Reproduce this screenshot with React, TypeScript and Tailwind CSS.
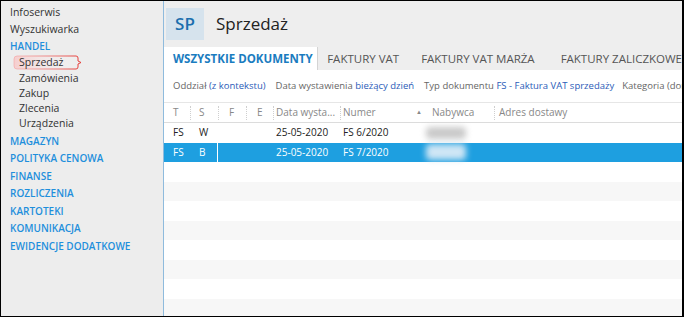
import React from "react";

const FONT = { fontFamily: '"Open Sans", "Noto Sans", sans-serif' };

const topItems = ["Infoserwis", "Wyszukiwarka"];
const subItems = ["Zamówienia", "Zakup", "Zlecenia", "Urządzenia"];
const sections = ["MAGAZYN", "POLITYKA CENOWA", "FINANSE", "ROZLICZENIA", "KARTOTEKI", "KOMUNIKACJA", "EWIDENCJE DODATKOWE"];

type Row = { t: string; s: string; date: string; num: string; selected?: boolean };

const rows: Row[] = [
  { t: "FS", s: "W", date: "25-05-2020", num: "FS 6/2020" },
  { t: "FS", s: "B", date: "25-05-2020", num: "FS 7/2020", selected: true },
];

function Sidebar() {
  return (
    <div className="w-[162px] shrink-0 bg-[#ededed] pt-[3px] text-[10.5px] text-[#333]" style={FONT}>
      {topItems.map((t) => (
        <div key={t} className="h-[17px] leading-[17px] pl-[9px]">{t}</div>
      ))}
      <div className="h-[16px] leading-[16px] pl-[9px] text-[10px] font-semibold text-[#1e8fdc]">HANDEL</div>
      {/* highlighted current item */}
      <div className="relative h-[17px] leading-[17px] pl-[18px]">
        <svg className="absolute left-[12px] top-[1px]" width="70" height="15" viewBox="0 0 70 15">
          <defs>
            <linearGradient id="hl" x1="0" x2="1" y1="0" y2="0">
              <stop offset="0" stopColor="#f4a3a3" stopOpacity="0.6" />
              <stop offset="1" stopColor="#e53935" stopOpacity="1" />
            </linearGradient>
            <linearGradient id="hlf" x1="0" x2="1" y1="0" y2="0">
              <stop offset="0" stopColor="#f7caca" stopOpacity="0.9" />
              <stop offset="0.5" stopColor="#f7e4e4" stopOpacity="0.4" />
              <stop offset="1" stopColor="#ffffff" stopOpacity="0" />
            </linearGradient>
          </defs>
          <path d="M4 1 H63 Q65 1 65 3 V6 L68 7.5 L65 9 V12 Q65 14 63 14 H4 Q1 14 1 11 V4 Q1 1 4 1 Z" fill="url(#hlf)" stroke="url(#hl)" strokeWidth="1" />
        </svg>
        <span className="relative">Sprzedaż</span>
      </div>
      {subItems.map((t) => (
        <div key={t} className="h-[15px] leading-[15px] pl-[18px]">{t}</div>
      ))}
      <div className="h-[1.5px]" />
      {sections.map((t) => (
        <div key={t} className="h-[17.5px] leading-[17.5px] pl-[9px] text-[10px] font-semibold text-[#1e8fdc]">{t}</div>
      ))}
    </div>
  );
}

function Tabs() {
  return (
    <div className="flex h-[23px] shrink-0 bg-[#eeeeee] text-[11.5px] whitespace-nowrap">
      <div className="flex items-center w-[158px] bg-white pl-[9px] font-bold text-[#1a7cc0] border-r border-[#d4d4d4]">
        WSZYSTKIE DOKUMENTY
      </div>
      <div className="flex items-center pl-[9px] pr-[22px] text-[#555]">FAKTURY VAT</div>
      <div className="flex items-center pr-[26px] text-[#555]">FAKTURY VAT MARŻA</div>
      <div className="flex items-center text-[#555]">FAKTURY ZALICZKOWE</div>
    </div>
  );
}

function Filters() {
  return (
    <div className="flex items-center h-[33px] shrink-0 pl-[9px] text-[9.5px] text-[#666] whitespace-nowrap border-b border-[#e6e6e6]">
      <span>Oddział <span className="text-[#2b5cb8]">(z kontekstu)</span></span>
      <span className="ml-[10px]">Data wystawienia <span className="text-[#2b5cb8]">bieżący dzień</span></span>
      <span className="ml-[10px]">Typ dokumentu <span className="text-[#2b5cb8]">FS - Faktura VAT sprzedaży</span></span>
      <span className="ml-[8px]">Kategoria (domyślna)</span>
    </div>
  );
}

function Sep() {
  return <div className="h-[14px] border-l border-dotted border-[#cfcfcf]" />;
}

function Grid() {
  const empty = Array.from({ length: 8 });
  return (
    <div className="text-[10px]">
      <div className="flex items-center h-[20px] text-[#888] whitespace-nowrap border-b border-[#dcdcdc]">
        <div className="w-[26px] pl-[9px]">T</div>
        <Sep />
        <div className="w-[27px] pl-[8px]">S</div>
        <Sep />
        <div className="w-[27px] pl-[10px]">F</div>
        <Sep />
        <div className="w-[26px] pl-[10px]">E</div>
        <Sep />
        <div className="w-[66px] pl-[2px] overflow-hidden">Data wysta...</div>
        <Sep />
        <div className="w-[75px] pl-[2px]">Numer</div>
        <div className="w-[78px] flex items-center">
          <span className="text-[6px] mr-[10px]">▲</span>
          <span>Nabywca</span>
        </div>
        <Sep />
        <div className="pl-[4px]">Adres dostawy</div>
      </div>
      {rows.map((r, i) => (
        <div
          key={i}
          className={
            r.selected
              ? "relative flex items-center h-[19.5px] bg-[#1e9fe0] text-white"
              : "relative flex items-center h-[19.5px] bg-white text-[#222]"
          }
        >
          <div className="w-[27px] pl-[9px]">{r.t}</div>
          <div className="w-[26px] pl-[8px]">{r.s}</div>
          <div className={r.selected ? "w-[55px] h-full border-l border-white" : "w-[55px] h-full"} />
          <div className="w-[67px] pl-[4px]">{r.date}</div>
          <div className="w-[80px] pl-[4px]">{r.num}</div>
          <div
            className={
              r.selected
                ? "ml-[7px] w-[40px] h-[16px] rounded-[4px] bg-[#cfe6f5] blur-[3px]"
                : "ml-[7px] w-[40px] h-[12px] rounded-[4px] bg-[#c9c9c9] blur-[3px]"
            }
          />
        </div>
      ))}
      {empty.map((_, i) => (
        <div key={i} className={i % 2 === 0 ? "h-[19.5px] bg-white" : "h-[19.5px] bg-[#f7f7f7]"} />
      ))}
    </div>
  );
}

export default function App() {
  return (
    <div className="w-[684px] h-[317px] overflow-hidden flex border border-black border-r-2 bg-white" style={FONT}>
      <Sidebar />
      <div className="flex-1 min-w-0 flex flex-col border-l border-[#8fbbdd] overflow-hidden">
        <div className="h-[46px] shrink-0 bg-[#eeeeee] flex items-center">
          <div className="ml-[2px] w-[38px] h-[32px] bg-[#d6e3ed] flex items-center justify-center text-[17px] font-semibold text-[#1c6fae]">
            SP
          </div>
          <div className="ml-[12px] text-[17px] text-[#222]">Sprzedaż</div>
        </div>
        <Tabs />
        <Filters />
        <Grid />
      </div>
    </div>
  );
}
